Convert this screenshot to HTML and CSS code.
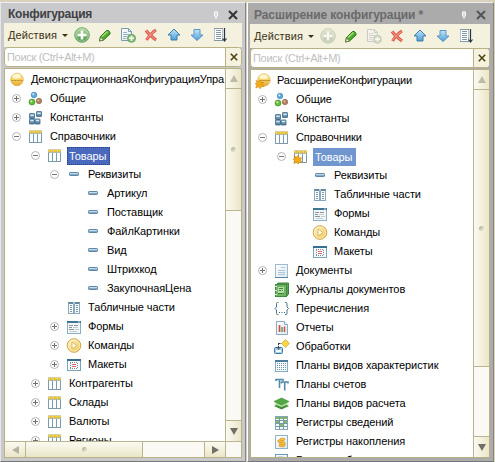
FILE: index.html
```html
<!DOCTYPE html>
<html lang="ru">
<head>
<meta charset="utf-8">
<title>Конфигурация</title>
<link rel="stylesheet" href="styles.css">
</head>
<body>
<svg class="defs" width="0" height="0">
  <defs>
    <linearGradient id="gold" x2="0" y2="1"><stop offset="0" stop-color="#fff8c8"/><stop offset=".4" stop-color="#fbd973"/><stop offset="1" stop-color="#e2a932"/></linearGradient>
    <linearGradient id="pale" x2="1" y2="1"><stop offset="0" stop-color="#fff6cf"/><stop offset="1" stop-color="#eec455"/></linearGradient>
    <linearGradient id="blue" x2="0" y2="1"><stop offset="0" stop-color="#c3e6fa"/><stop offset="1" stop-color="#4b9edb"/></linearGradient>
    <linearGradient id="steel" x2="0" y2="1"><stop offset="0" stop-color="#a8c8de"/><stop offset="1" stop-color="#4b7896"/></linearGradient>
    <linearGradient id="green" x2="0" y2="1"><stop offset="0" stop-color="#b8dca6"/><stop offset="1" stop-color="#409143"/></linearGradient>
    <linearGradient id="sheet" x2="1" y2="1"><stop offset="0" stop-color="#fff"/><stop offset="1" stop-color="#dce8f1"/></linearGradient>
  </defs>
  <symbol id="plus" viewBox="0 0 9 9"><circle cx="4.5" cy="4.5" r="4" fill="#fff" stroke="#b4b4b4"/><path d="M2 4.500h5M4.500 2v5" stroke="#707070"/></symbol>
  <symbol id="minus" viewBox="0 0 9 9"><circle cx="4.5" cy="4.5" r="4" fill="#fff" stroke="#b4b4b4"/><path d="M2 4.500h5" stroke="#777"/></symbol>
  <symbol id="root" viewBox="0 0 16 16"><circle cx="8" cy="7.500" r="6.300" fill="url(#gold)" stroke="#dfb04a" stroke-width=".7"/><path d="M2.500 8.500h11" stroke="#b98a28" stroke-dasharray="2 1"/><ellipse cx="7.500" cy="4.500" rx="3.800" ry="2.200" fill="#fffbe0" opacity=".8"/></symbol>
  <symbol id="star" viewBox="0 0 10 10"><path d="M1 1l2.600 1L5.500.5l.8 2.600L9 3 7.800 5.400 9.500 7.500 6.700 7.500 5.500 9.700 4 7.600.8 9l.9-3L0 4.300l2.200-.6z" fill="#f4ab16" stroke="#c98a10" stroke-width=".6"/></symbol>
  <symbol id="rootx" viewBox="0 0 16 16"><circle cx="9" cy="7" r="6.200" fill="url(#gold)" stroke="#dfb04a" stroke-width=".7"/><path d="M5 7.500h10" stroke="#c99a35"/><ellipse cx="8.500" cy="4" rx="3.800" ry="2" fill="#fffbe0" opacity=".8"/><use href="#star" x="0" y="6.500" width="9.500" height="9.500"/></symbol>
  <symbol id="common" viewBox="0 0 16 16"><circle cx="6" cy="4" r="2.800" fill="#5faadd" stroke="#3478a8" stroke-width=".6"/><circle cx="4" cy="11" r="3" fill="#66bd3a" stroke="#338520" stroke-width=".6"/><circle cx="11" cy="10" r="2.700" fill="#b88468" stroke="#805440" stroke-width=".6"/><circle cx="5.300" cy="3.300" r="1" fill="#d4efff"/><circle cx="3.300" cy="10.200" r="1" fill="#d5f5bd"/><circle cx="10.300" cy="9.200" r=".8" fill="#ead0c2"/></symbol>
  <symbol id="consts" viewBox="0 0 16 16"><g fill="url(#steel)" stroke="#3b6684" stroke-width=".8"><rect x="1.500" y="3.500" width="5" height="5" rx=".5"/><rect x="1.500" y="9" width="5" height="5" rx=".5"/><rect x="7" y="9" width="5" height="5" rx=".5"/><rect x="8.500" y="1.500" width="5" height="5" rx=".5"/></g><path d="M9.500 3.500h3M2.500 5.500h3M2.500 10.500h3M8 10.500h3" stroke="#d9eaf5"/></symbol>
  <symbol id="table" viewBox="0 0 16 16"><path d="M1 2h13v12H1z" fill="#fcfdfd"/><path d="M1 2h13v2.500H1z" fill="#f0d25c"/><path d="M1 1.500h13" stroke="#d6cfa8"/><path d="M1.500 3.500v10M5.500 3.500v10M9.500 3.500v10M13.500 3.500v10M1 13.500h13" stroke="#7c9cae"/><path d="M1.500 4.500h12" stroke="#b6bca0"/><path d="M3 3h1.500M7 3h1.500M11 3h1.500" stroke="#edbd16" stroke-width="2"/></symbol>
  <symbol id="tablex" viewBox="0 0 16 16"><use href="#table" width="16" height="16"/><use href="#star" x="0" y="6" width="9.500" height="9.500"/></symbol>
  <symbol id="attr" viewBox="0 0 16 16"><rect x="3.500" y="5.500" width="9" height="3" rx=".7" fill="#82aac6" stroke="#5d87a5"/><path d="M4 6.500h8" stroke="#c4dcea"/></symbol>
  <symbol id="parts" viewBox="0 0 16 16"><path d="M2 3h12v11H2z" fill="#f7fafc"/><path d="M2 3h5.500M8.500 3H14" stroke="#33627f" stroke-width="1.500"/><path d="M2.500 3v10M7.500 4v9M8.500 4v9M13.500 3v10M2 13.500h12" stroke="#8aa8bc"/><path d="M4 5.500h2M4 7.500h2M4 9.500h2M4 11.500h2M10 5.500h2M10 7.500h2M10 9.500h2M10 11.500h2" stroke="#8497a5"/></symbol>
  <symbol id="form" viewBox="0 0 16 16"><rect x="1.500" y="2.500" width="13" height="12" fill="#f2f7fa" stroke="#8dafc4"/><path d="M1 3h14" stroke="#3f7595" stroke-width="2"/><path d="M12 3h2" stroke="#c9deea"/><path d="M3 6.500h4M3 8.500h3M3 10.500h5M8 6.500h4M8 8.500h2" stroke="#8d949b"/><path d="M7 8.500h5M9 10.500h4M4 12.500h7" stroke="#c5cdd3"/></symbol>
  <symbol id="cmd" viewBox="0 0 16 16"><circle cx="8" cy="7.500" r="6.800" fill="url(#pale)" stroke="#cfa44a"/><circle cx="8" cy="7.500" r="5.600" fill="none" stroke="#fff3bd" stroke-width=".7"/><path d="M6 4L10.800 7.500 6 11z" fill="#fffbe8" stroke="#d4ae54" stroke-width=".8"/></symbol>
  <symbol id="layout" viewBox="0 0 16 16"><rect x="1.500" y="2.500" width="13" height="11" fill="#f8fbfd" stroke="#7ba4bd"/><path d="M1 3h14" stroke="#376f93" stroke-width="2"/><path d="M4 5.500h8M4 11.500h8" stroke="#7c8b96" stroke-dasharray="1 1"/><path d="M4.500 6v5M11.500 6v5" stroke="#7c8b96" stroke-dasharray="1 1"/><path d="M6 7.500h4M6 9.500h4" stroke="#df6860"/></symbol>
  <symbol id="doc" viewBox="0 0 16 16"><rect x="1.500" y="1.500" width="12" height="13" fill="url(#sheet)" stroke="#9dbace"/><path d="M7 4.500h4M4 7.500h7M4 9.500h7M4 11.500h7" stroke="#b0c6d6"/><path d="M1 14.500h13" stroke="#5685a3"/></symbol>
  <symbol id="journal" viewBox="0 0 16 16"><path d="M2 3l2-2h10.500v11l-2 2.500H2z" fill="#5ba354" stroke="#3f8240"/><rect x="1.500" y="2.500" width="11" height="12" fill="#70b561" stroke="#3f8a42"/><path d="M4 5h6v6H4z" fill="#b9dfa8"/><path d="M5 6.500h4M5 8.500h2M8 8.500h1M4 11.500h6" stroke="#398339"/><path d="M1 4.500h2M1 8.500h2M1 12.500h2" stroke="#d8ead0"/></symbol>
  <symbol id="enum" viewBox="0 0 16 16"><path d="M4.500 1.500H3.500q-1 0-1 1v3.500L1 7.500 2.500 9v3.500q0 1 1 1h1M11 1.500h1q1 0 1 1v3.500l1.500 1.500L13 9v3.500q0 1-1 1h-1" fill="none" stroke="#4f748c"/><path d="M5 11.500h1M7.500 11.500h1M10 11.500h1" stroke="#3d6681"/></symbol>
  <symbol id="report" viewBox="0 0 16 16"><path d="M2.500 1.500h8l3 3v10h-11z" fill="url(#sheet)" stroke="#8aa9be"/><path d="M10.500 1.500v3h3" fill="#fff" stroke="#8aa9be"/><path d="M5.500 5v7" stroke="#d64a44" stroke-width="1.700"/><path d="M8 7v5" stroke="#4aa35a" stroke-width="1.500"/><path d="M10.500 6.500V12" stroke="#d64a44" stroke-width="1.500"/></symbol>
  <symbol id="proc" viewBox="0 0 16 16"><rect x=".5" y="8.500" width="8" height="6" rx="1" fill="#a7d1eb" stroke="#47799c"/><path d="M2 11h5v2H2z" fill="#f4fbff"/><path d="M4.500 4v6M2.500 8l2 2.500 2-2.500M4.500 4.500H8" fill="none" stroke="#32434f" stroke-dasharray="2 .7"/><path d="M11.500 .5l4 4-4 4-4-4z" fill="#f9d547" stroke="#d2aa45" stroke-width=".8"/></symbol>
  <symbol id="pvh" viewBox="0 0 16 16"><rect x="1.500" y="2.500" width="12" height="11" fill="#f8fbfd" stroke="#8aabc0"/><path d="M1 3h13" stroke="#4b7c9d" stroke-width="2"/><path d="M3 5.500h10M3 7.500h10M3 9.500h10M3 11.500h10" stroke="#6b93ad" stroke-dasharray="1 1"/></symbol>
  <symbol id="accounts" viewBox="0 0 16 16"><path d="M2 4V2.500h7V4M5.500 2.500v8.500M7.500 6.500V5h6.500v1.500M10.700 5v8.500" fill="none" stroke="#568aaa" stroke-width="1.600"/></symbol>
  <symbol id="layers" viewBox="0 0 16 16"><path d="M7.500 6.500L15 10l-7.500 3.500L0 10z" fill="#3f8f36"/><path d="M7.500 5L15 8l-7.500 3L0 8z" fill="#b5dfa0"/><path d="M7.500 2L15 5.500 7.500 9 0 5.500z" fill="#52a845" stroke="#398a36" stroke-width=".6"/></symbol>
  <symbol id="info" viewBox="0 0 16 16"><rect x="1.500" y="1.500" width="12" height="13" fill="#f5fafb" stroke="#86a4b4"/><path d="M5.500 2v12M9.500 2v12M2 5.500h11M2 8.500h11M2 11.500h11" stroke="#7796a6"/><path d="M2 3h11M2 7h3M10 7h3M6 10h3" stroke="#7dba69" stroke-width="2" stroke-dasharray="3 1"/></symbol>
  <symbol id="accum" viewBox="0 0 16 16"><rect x="1.500" y="1.500" width="12" height="13" fill="url(#sheet)" stroke="#8fb3ca"/><g fill="#f5bf3d" stroke="#cc8c20" stroke-width=".5"><ellipse cx="8" cy="11.300" rx="3.200" ry="1.600"/><ellipse cx="8.500" cy="9.300" rx="3.200" ry="1.600"/><ellipse cx="6.500" cy="7" rx="3" ry="1.500"/><ellipse cx="8.500" cy="5.300" rx="2.600" ry="1.300"/></g></symbol>
  <symbol id="book" viewBox="0 0 16 16"><rect x="1.500" y="1.500" width="12" height="13" fill="url(#sheet)" stroke="#6d9aba"/><path d="M4 4.500h5M6.500 4v7M8 6.500h4" stroke="#4b80a2" stroke-width="1.500"/></symbol>
  <symbol id="t-add" viewBox="0 0 16 16"><circle cx="8" cy="8" r="7.300" fill="url(#green)" stroke="#6aa768"/><circle cx="8" cy="8" r="6.200" fill="none" stroke="#cbe3bb" stroke-width=".7"/><path d="M3.500 8h9M8 3.500v9" stroke="#fff" stroke-width="2.600"/></symbol>
  <symbol id="t-edit" viewBox="0 0 16 16"><path d="M2.500 14L3.500 9.500 9.500 3.500q2-1 3.500 2v1.500L6.500 13z" fill="#4fab2f" stroke="#28731d"/><path d="M5 9.500L10.500 4.500" stroke="#a8df72" stroke-width="1.500"/><path d="M2.500 14l1-4 3 3z" fill="#eff0c3" stroke="#52702c" stroke-width=".7"/></symbol>
  <symbol id="t-copy" viewBox="0 0 16 16"><path d="M1.500 1.500h7l3 3v9h-10z" fill="url(#sheet)" stroke="#7a9db2"/><path d="M8.500 1.500v3h3" fill="none" stroke="#7a9db2"/><path d="M3 5.500h4M3 7.500h6M3 9.500h4M3 11.500h3" stroke="#9cb4c3"/><circle cx="11.500" cy="11.300" r="4" fill="#86bf78" stroke="#549852" stroke-width=".8"/><path d="M9 11.300h5M11.500 8.800v5" stroke="#fff" stroke-width="1.600"/></symbol>
  <symbol id="t-del" viewBox="0 0 16 16"><path d="M3 3.500q3 4 10 9.500M13 3q-5 3-9.500 10" fill="none" stroke="#db5244" stroke-width="3"/><path d="M3 3.500q3 4 9.500 9M12.500 3.500q-5 3-9 9" fill="none" stroke="#f69a87" stroke-width="1.100"/></symbol>
  <symbol id="t-up" viewBox="0 0 16 16"><path d="M8 2l6 6h-3v5H5V8H2z" fill="url(#blue)" stroke="#3f7da8"/></symbol>
  <symbol id="t-down" viewBox="0 0 16 16"><path d="M8 13.500L2 8h3V2.500h6V8h3z" fill="url(#blue)" stroke="#5a96c0"/></symbol>
  <symbol id="t-sort" viewBox="0 0 16 16"><path d="M2 1h9v13H2z" fill="#fff"/><path d="M2.500 1v13M10.500 1v13" stroke="#b5c4ce"/><path d="M2 1.500h9M4 3.500h5M4 5.500h5M4 7.500h5M4 9.500h5M4 11.500h5M2 13.500h9" stroke="#8496a3"/><path d="M12.500 1v13M10.500 11.500l2 2.500 2-2.500" fill="none" stroke="#223746" stroke-width="1.200"/></symbol>
  <symbol id="pin" viewBox="0 0 6 8"><rect x="1.500" y=".5" width="3" height="5" rx="1" fill="#ddd" stroke="#fff"/><path d="M3 6v2" stroke="#fff"/></symbol>
  <symbol id="x" viewBox="0 0 10 10"><path d="M1 1l8 8M9 1L1 9" fill="none" stroke="currentColor" stroke-width="2"/></symbol>
</svg>
<main class="desk">
  <section class="panel left">
    <header class="title"><span>Конфигурация</span><svg class="pin"><use href="#pin"/></svg><svg class="close"><use href="#x"/></svg></header>
    <div class="tools"><span class="actions">Действия</span><i class="caret"></i><svg><use href="#t-add"/></svg><svg><use href="#t-edit"/></svg><svg><use href="#t-copy"/></svg><svg><use href="#t-del"/></svg><svg><use href="#t-up"/></svg><svg><use href="#t-down"/></svg><svg><use href="#t-sort"/></svg></div>
    <div class="search"><span>Поиск (Ctrl+Alt+M)</span><b><svg><use href="#x"/></svg></b></div>
    <div class="view">
      <ul class="tree">
        <li class="l0"><svg><use href="#root"/></svg><span>ДемонстрационнаяКонфигурацияУпра</span></li>
        <li><i><svg><use href="#plus"/></svg></i><svg><use href="#common"/></svg><span>Общие</span></li>
        <li><i><svg><use href="#plus"/></svg></i><svg><use href="#consts"/></svg><span>Константы</span></li>
        <li><i><svg><use href="#minus"/></svg></i><svg><use href="#table"/></svg><span>Справочники</span></li>
        <li class="l2"><i><svg><use href="#minus"/></svg></i><svg><use href="#table"/></svg><span class="selected">Товары</span></li>
        <li class="l3"><i><svg><use href="#minus"/></svg></i><svg><use href="#attr"/></svg><span>Реквизиты</span></li>
        <li class="l4"><i></i><svg><use href="#attr"/></svg><span>Артикул</span></li>
        <li class="l4"><i></i><svg><use href="#attr"/></svg><span>Поставщик</span></li>
        <li class="l4"><i></i><svg><use href="#attr"/></svg><span>ФайлКартинки</span></li>
        <li class="l4"><i></i><svg><use href="#attr"/></svg><span>Вид</span></li>
        <li class="l4"><i></i><svg><use href="#attr"/></svg><span>Штрихкод</span></li>
        <li class="l4"><i></i><svg><use href="#attr"/></svg><span>ЗакупочнаяЦена</span></li>
        <li class="l3"><i></i><svg><use href="#parts"/></svg><span>Табличные части</span></li>
        <li class="l3"><i><svg><use href="#plus"/></svg></i><svg><use href="#form"/></svg><span>Формы</span></li>
        <li class="l3"><i><svg><use href="#plus"/></svg></i><svg><use href="#cmd"/></svg><span>Команды</span></li>
        <li class="l3"><i><svg><use href="#plus"/></svg></i><svg><use href="#layout"/></svg><span>Макеты</span></li>
        <li class="l2"><i><svg><use href="#plus"/></svg></i><svg><use href="#table"/></svg><span>Контрагенты</span></li>
        <li class="l2"><i><svg><use href="#plus"/></svg></i><svg><use href="#table"/></svg><span>Склады</span></li>
        <li class="l2"><i><svg><use href="#plus"/></svg></i><svg><use href="#table"/></svg><span>Валюты</span></li>
        <li class="l2"><i><svg><use href="#plus"/></svg></i><svg><use href="#table"/></svg><span>Регионы</span></li>
      </ul>
      <div class="vbar"><b class="btn"><i class="up"></i></b><b class="thumb"><i class="grip"></i></b><b class="btn end"><i class="down"></i></b></div>
      <div class="hbar"><b class="btn"><i class="back"></i></b><b class="thumb"><i class="grip"></i></b><b class="btn end"><i class="fwd"></i></b></div>
      <div class="corner"></div>
    </div>
  </section>
  <section class="panel right">
    <header class="title"><span>Расширение конфигурации *</span><svg class="pin"><use href="#pin"/></svg><svg class="close"><use href="#x"/></svg></header>
    <div class="tools"><span class="actions">Действия</span><i class="caret"></i><svg class="off"><use href="#t-add"/></svg><svg><use href="#t-edit"/></svg><svg class="off"><use href="#t-copy"/></svg><svg><use href="#t-del"/></svg><svg><use href="#t-up"/></svg><svg><use href="#t-down"/></svg><svg><use href="#t-sort"/></svg></div>
    <div class="search"><span>Поиск (Ctrl+Alt+M)</span><b><svg><use href="#x"/></svg></b></div>
    <div class="view">
      <ul class="tree">
        <li class="l0"><svg><use href="#rootx"/></svg><span>РасширениеКонфигурации</span></li>
        <li><i><svg><use href="#plus"/></svg></i><svg><use href="#common"/></svg><span>Общие</span></li>
        <li><i></i><svg><use href="#consts"/></svg><span>Константы</span></li>
        <li><i><svg><use href="#minus"/></svg></i><svg><use href="#table"/></svg><span>Справочники</span></li>
        <li class="l2"><i><svg><use href="#minus"/></svg></i><svg><use href="#tablex"/></svg><span class="selected">Товары</span></li>
        <li class="l3"><i></i><svg><use href="#attr"/></svg><span>Реквизиты</span></li>
        <li class="l3"><i></i><svg><use href="#parts"/></svg><span>Табличные части</span></li>
        <li class="l3"><i></i><svg><use href="#form"/></svg><span>Формы</span></li>
        <li class="l3"><i></i><svg><use href="#cmd"/></svg><span>Команды</span></li>
        <li class="l3"><i></i><svg><use href="#layout"/></svg><span>Макеты</span></li>
        <li><i><svg><use href="#plus"/></svg></i><svg><use href="#doc"/></svg><span>Документы</span></li>
        <li><i></i><svg><use href="#journal"/></svg><span>Журналы документов</span></li>
        <li><i></i><svg><use href="#enum"/></svg><span>Перечисления</span></li>
        <li><i></i><svg><use href="#report"/></svg><span>Отчеты</span></li>
        <li><i></i><svg><use href="#proc"/></svg><span>Обработки</span></li>
        <li><i></i><svg><use href="#pvh"/></svg><span>Планы видов характеристик</span></li>
        <li><i></i><svg><use href="#accounts"/></svg><span>Планы счетов</span></li>
        <li><i></i><svg><use href="#layers"/></svg><span>Планы видов расчета</span></li>
        <li><i></i><svg><use href="#info"/></svg><span>Регистры сведений</span></li>
        <li><i></i><svg><use href="#accum"/></svg><span>Регистры накопления</span></li>
        <li><i></i><svg><use href="#book"/></svg><span>Регистры бухгалтерии</span></li>
      </ul>
      <div class="vbar"><b class="btn"><i class="up"></i></b><b class="thumb"><i class="grip"></i></b><b class="btn end"><i class="down"></i></b></div>
    </div>
  </section>
</main>
</body>
</html>
```
FILE: styles.css
```css
* { box-sizing: border-box; }
body { margin: 0; background: #d8d2bd; font: 11px/19px "Liberation Sans", Arial, sans-serif; color: #000; overflow: hidden; }
.defs { position: absolute; }
.desk { display: flex; gap: 1px; width: 495px; height: 462px; padding-top: 2px; background: #d8d2bd; }
.panel { display: flex; flex-direction: column; height: 460px; border-bottom: 1px solid #777; border-top: 1px solid #eee; }
.left { width: 246px; padding: 0 3px 3px; background: #c9c9cb; border-right: 1px solid #858585; border-left: 1px solid #e6e6e6; }
.right { width: 247px; padding: 0 3px 3px 2px; background: #ababab; border-right: 1px solid #858585; border-left: 1px solid #fff; }
.title { display: flex; align-items: center; flex: none; height: 20px; padding: 3px 4px 0; font-size: 12px; font-weight: bold; letter-spacing: -.25px; color: #404044; }
.right .title { height: 21px; letter-spacing: -.08px; color: #6a6a6a; }
.title span { flex: 1; white-space: nowrap; }
.pin { width: 6px; height: 8px; margin-right: 9px; }
.close { width: 10px; height: 10px; color: #333; }
.right .close { color: #555; }
.tools { display: flex; align-items: center; flex: none; height: 24px; padding-left: 4px; background: #f4f1df; color: #3d3413; }
.tools svg { width: 16px; height: 16px; margin-right: 7px; flex: none; }
.tools .off { opacity: .4; filter: grayscale(.6); }
.actions { width: 50px; white-space: nowrap; letter-spacing: .1px; }
.caret { width: 0; height: 0; margin: 0 6px 0 4px; border: 3px solid transparent; border-top-color: #3d3413; border-bottom: 0; }
.search { display: flex; flex: none; height: 20px; border: 1px solid #b9b084; border-radius: 4px; background: #fff; color: #c0c0c0; overflow: hidden; line-height: 18px; letter-spacing: -.3px; }
.search span { flex: 1; padding-left: 2px; }
.search b { display: flex; align-items: center; justify-content: center; width: 16px; border-left: 1px solid #b9b084; background: #f5f2df; color: #4e4212; }
.search b svg { width: 8px; height: 8px; }
.view { display: grid; grid-template: 1fr / 1fr 16px; flex: 1; min-height: 0; margin-top: 1px; border: 1px solid #b9b084; background: #fff; }
.left .view { grid-template-rows: 1fr 16px; }
.tree { margin: 0; padding: 1px 0 0; list-style: none; min-width: 0; min-height: 0; overflow: hidden; letter-spacing: -.08px; }
li { display: flex; align-items: center; height: 19px; white-space: nowrap; }
li > svg { width: 16px; height: 16px; flex: none; margin-right: 4px; }
li > span { padding: 0 2px; }
li > i { display: flex; justify-content: center; flex: none; width: 23px; }
li > i svg { width: 9px; height: 9px; }
.l0 { padding-left: 4px; letter-spacing: -.14px; }
.l2 { padding-left: 19px; }
.l3 { padding-left: 38px; }
.l4 { padding-left: 57px; }
.selected { height: 18px; padding-right: 4px; line-height: 18px; background: #4a69bd; color: #fff; outline: 1px dotted #24408c; outline-offset: -1px; }
.right .selected { background: #7096d0; outline: 0; }
.vbar, .hbar { display: flex; background: #faf9f4; min-height: 0; }
.vbar { flex-direction: column; border-left: 1px solid #b9b593; }
.hbar { border-top: 1px solid #b9b593; }
.corner { border-top: 1px solid #b9b593; border-left: 1px solid #b9b593; background: #faf9f4; }
.btn, .thumb { display: flex; align-items: center; justify-content: center; flex: none; background: linear-gradient(90deg, #fbfaf0, #ebe6c9); }
.vbar .btn, .vbar .thumb { border-bottom: 1px solid #b9b593; }
.vbar .btn { height: 20px; }
.left .vbar .thumb { height: 122px; }
.right .vbar .thumb { height: 277px; }
.vbar .end { margin-top: auto; border-top: 1px solid #b9b593; border-bottom: 0; height: 21px; }
.hbar .btn, .hbar .thumb { border-right: 1px solid #b9b593; background: linear-gradient(#fbfaf0, #ebe6c9); }
.hbar .btn { width: 21px; }
.hbar .thumb { width: 117px; }
.hbar .end { margin-left: auto; border-left: 1px solid #b9b593; border-right: 0; }
.grip { width: 5px; height: 5px; border-radius: 50%; background: linear-gradient(135deg, #a9a78e, #f5f3e0); }
.up, .down, .back, .fwd { width: 0; height: 0; border: 4px solid transparent; }
.up { border-bottom: 7px solid #bdbba6; border-top: 0; }
.down { border-top: 7px solid #6f6f68; border-bottom: 0; }
.back { border-right: 7px solid #b5b3a4; border-left: 0; }
.fwd { border-left: 7px solid #6f6f68; border-right: 0; }
```
